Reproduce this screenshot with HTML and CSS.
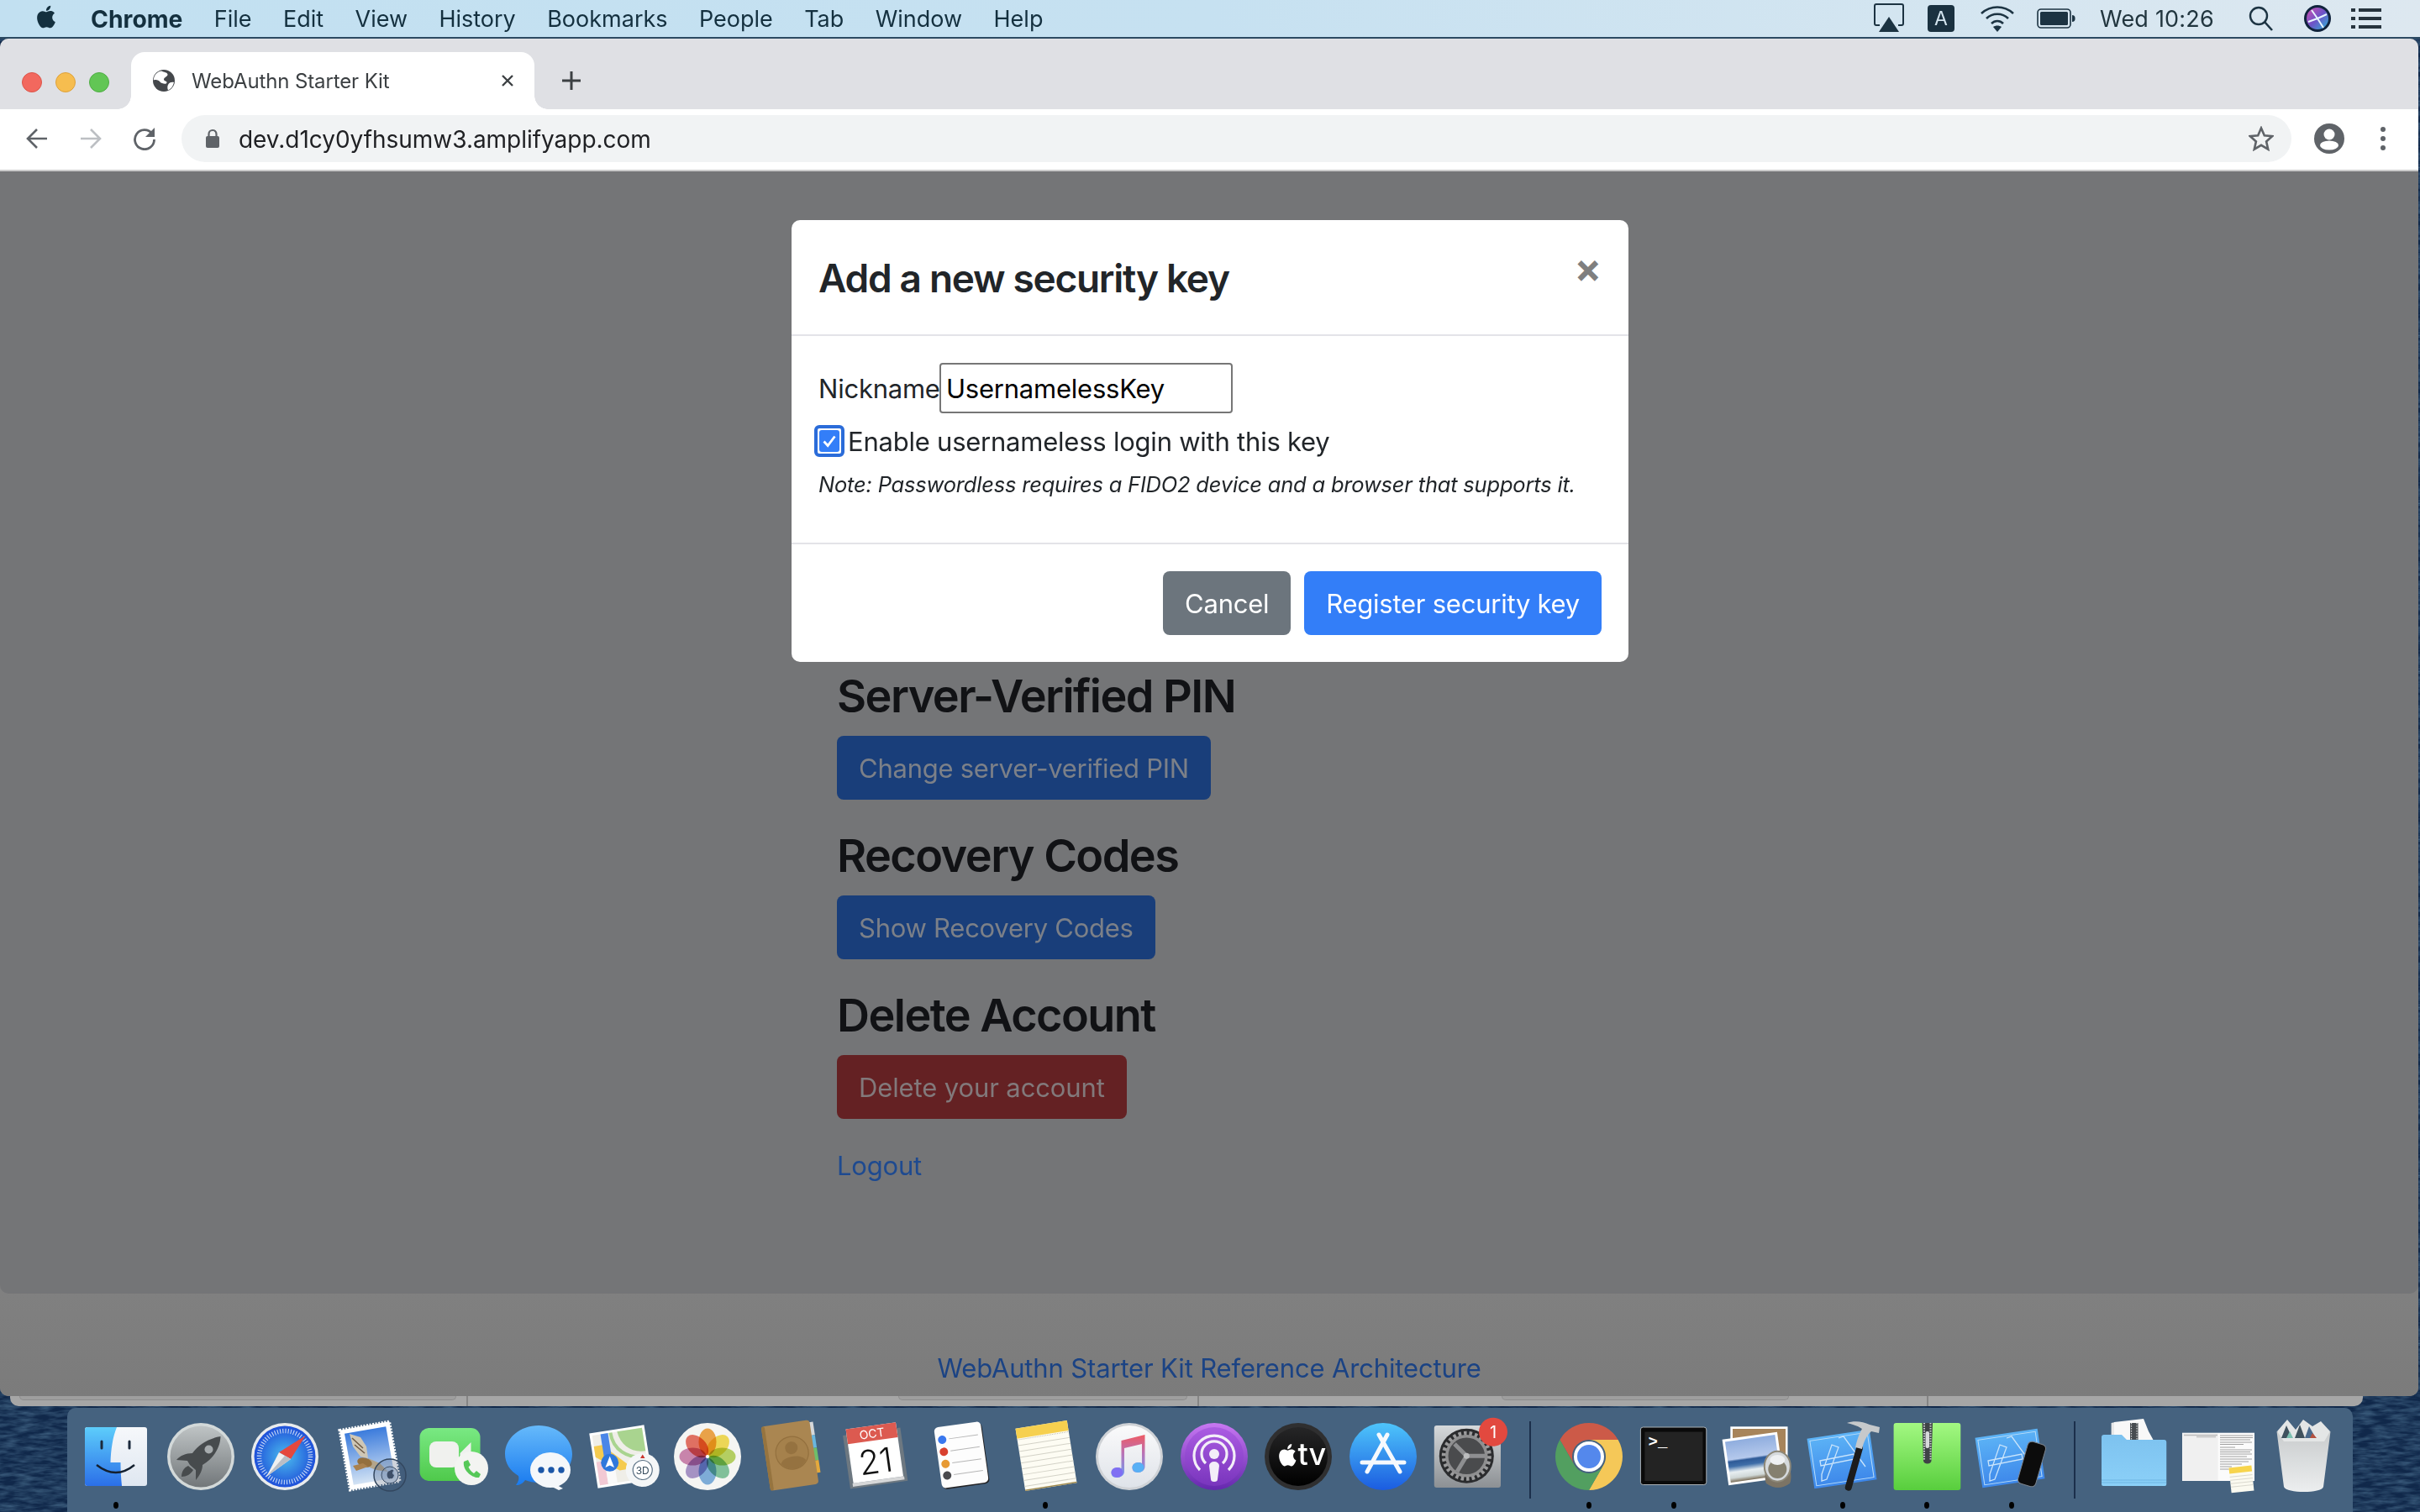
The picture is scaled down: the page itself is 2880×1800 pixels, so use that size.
FILE: index.html
```html
<!DOCTYPE html>
<html lang="en">
<head>
<meta charset="utf-8">
<title>WebAuthn Starter Kit</title>
<link rel="stylesheet" href="styles.css">
</head>
<body>
<svg class="defs" aria-hidden="true"><defs>
<linearGradient id="gFinderB" x1="0" y1="0" x2="0" y2="1"><stop offset="0" stop-color="#5dcdfb"/><stop offset="1" stop-color="#2b6fe8"/></linearGradient>
<linearGradient id="gFinderW" x1="0" y1="0" x2="0" y2="1"><stop offset="0" stop-color="#f6f8fb"/><stop offset="1" stop-color="#dfe7f1"/></linearGradient>
<linearGradient id="gRocket" x1="0" y1="0" x2="0" y2="1"><stop offset="0" stop-color="#bfc4c5"/><stop offset="1" stop-color="#72777a"/></linearGradient>
<radialGradient id="gSafari"><stop offset="0" stop-color="#4bbdee"/><stop offset="1" stop-color="#1f50d9"/></radialGradient>
<linearGradient id="gSky" x1="0" y1="0" x2="0" y2="1"><stop offset="0" stop-color="#3b7bdc"/><stop offset="1" stop-color="#d3e3f4"/></linearGradient>
<linearGradient id="gFace" x1="0" y1="0" x2="0" y2="1"><stop offset="0" stop-color="#79e983"/><stop offset="1" stop-color="#4fc94b"/></linearGradient>
<linearGradient id="gMsg" x1="0" y1="0" x2="0" y2="1"><stop offset="0" stop-color="#66bafb"/><stop offset="1" stop-color="#1a7bef"/></linearGradient>
<linearGradient id="gMusicBg" x1="0" y1="0" x2="0" y2="1"><stop offset="0" stop-color="#fafafb"/><stop offset="1" stop-color="#dfe3e9"/></linearGradient>
<linearGradient id="gNote" x1="0" y1="0" x2="0" y2="1"><stop offset="0" stop-color="#ee5a63"/><stop offset=".45" stop-color="#b873b8"/><stop offset="1" stop-color="#6c9df2"/></linearGradient>
<linearGradient id="gPod" x1="0" y1="0" x2="0" y2="1"><stop offset="0" stop-color="#c878f2"/><stop offset="1" stop-color="#6428ad"/></linearGradient>
<linearGradient id="gPod2" x1="0" y1="0" x2="0" y2="1"><stop offset="0" stop-color="#ab5ce2"/><stop offset="1" stop-color="#7935bd"/></linearGradient>
<linearGradient id="gTv" x1="0" y1="0" x2="0" y2="1"><stop offset="0" stop-color="#262627"/><stop offset="1" stop-color="#000"/></linearGradient>
<linearGradient id="gStore" x1="0" y1="0" x2="0" y2="1"><stop offset="0" stop-color="#4ec5fb"/><stop offset="1" stop-color="#1b5ce0"/></linearGradient>
<linearGradient id="gPrefs" x1="0" y1="0" x2="0" y2="1"><stop offset="0" stop-color="#d6d9db"/><stop offset="1" stop-color="#8c9094"/></linearGradient>
<linearGradient id="gPrint" x1="0" y1="0" x2="0" y2="1"><stop offset="0" stop-color="#5cb3f6"/><stop offset="1" stop-color="#3d87ea"/></linearGradient>
<linearGradient id="gZip" x1="0" y1="0" x2="0" y2="1"><stop offset="0" stop-color="#a3f882"/><stop offset="1" stop-color="#58ce3d"/></linearGradient>
<linearGradient id="gFolder" x1="0" y1="0" x2="0" y2="1"><stop offset="0" stop-color="#7dc2ef"/><stop offset="1" stop-color="#8bd0f8"/></linearGradient>
<linearGradient id="gTrash" x1="0" y1="0" x2="0" y2="1"><stop offset="0" stop-color="#c9cccd"/><stop offset="1" stop-color="#eceeef"/></linearGradient>
<linearGradient id="gOcean" x1="0" y1="0" x2="0" y2="1"><stop offset="0" stop-color="#8fadde"/><stop offset=".45" stop-color="#b5c9ec"/><stop offset=".5" stop-color="#2e5a97"/><stop offset=".62" stop-color="#3f6ea8"/><stop offset=".76" stop-color="#e7eef1"/><stop offset=".9" stop-color="#cfd7d6"/><stop offset="1" stop-color="#7b6e58"/></linearGradient>
<linearGradient id="gSiri" x1="0" y1="0" x2="1" y2="1"><stop offset="0" stop-color="#d24fb0"/><stop offset=".5" stop-color="#6d53c8"/><stop offset="1" stop-color="#2fb5d8"/></linearGradient>
</defs></svg>

<header class="menubar">
  <svg class="apple" viewBox="0 0 24 24"><path d="M18.71 19.5c-.83 1.24-1.71 2.45-3.05 2.47-1.34.03-1.77-.79-3.29-.79-1.53 0-2 .77-3.27.82-1.31.05-2.3-1.32-3.14-2.53C4.25 17 2.94 12.45 4.7 9.39c.87-1.52 2.43-2.48 4.12-2.51 1.28-.02 2.5.87 3.29.87.78 0 2.26-1.07 3.81-.91.65.03 2.47.26 3.64 1.98-.09.06-2.17 1.28-2.15 3.81.03 3.02 2.65 4.03 2.68 4.04-.03.07-.42 1.44-1.38 2.83M13 3.5c.73-.83 1.94-1.46 2.94-1.5.13 1.17-.34 2.35-1.04 3.19-.69.85-1.83 1.51-2.95 1.42-.15-1.15.41-2.35 1.05-3.11z"/></svg>
  <nav class="menus">
    <span class="menu-app">Chrome</span><span>File</span><span>Edit</span><span>View</span><span>History</span><span>Bookmarks</span><span>People</span><span>Tab</span><span>Window</span><span>Help</span>
  </nav>
  <div class="status">
    <svg class="st-air" viewBox="0 0 36 38"><path d="M7 27H3a2 2 0 0 1-2-2V4a2 2 0 0 1 2-2h30a2 2 0 0 1 2 2v21a2 2 0 0 1-2 2h-4" fill="none" stroke="#1c3342" stroke-width="2"/><path d="M18 17 30 35H6Z" fill="#1c3342"/></svg>
    <div class="st-a">A</div>
    <svg class="st-wifi" viewBox="0 0 42 32"><g fill="none" stroke="#1c3342" stroke-width="2.6"><path d="M2 10C13 0 29 0 40 10"/><path d="M8 16C15 9 27 9 34 16"/><path d="M14 22C18 18 24 18 28 22"/></g><path d="M21 32 16 26C19 24 23 24 26 26Z" fill="#1c3342"/></svg>
    <svg class="st-batt" viewBox="0 0 46 24"><rect x="1" y="1" width="39" height="22" rx="4" fill="none" stroke="#1c3342" stroke-width="1.6"/><rect x="4" y="4" width="33" height="16" rx="1.5" fill="#1c3342"/><path d="M42 8c2.4 0 3.6 1.6 3.6 4s-1.2 4-3.6 4Z" fill="#1c3342"/></svg>
    <span class="st-time">Wed 10:26</span>
    <svg class="st-search" viewBox="0 0 30 30"><circle cx="12" cy="12" r="10" fill="none" stroke="#1c3342" stroke-width="2.4"/><path d="M19 19 28 29" stroke="#1c3342" stroke-width="2.6"/></svg>
    <svg class="st-siri" viewBox="0 0 32 32"><circle cx="16" cy="16" r="16" fill="#10233c"/><circle cx="16" cy="16" r="13" fill="url(#gSiri)"/><path d="M16 16 9 6M16 16 27 11M16 16 23 27M16 16 5 20" stroke="#e8f6ff" stroke-width="2"/></svg>
    <svg class="st-list" viewBox="0 0 36 26"><g fill="#26333d"><rect y="1" width="5" height="4"/><rect y="11" width="5" height="4"/><rect y="21" width="5" height="4"/><rect x="9" y="1" width="27" height="4"/><rect x="9" y="11" width="27" height="4"/><rect x="9" y="21" width="27" height="4"/></g></svg>
  </div>
</header>

<div class="window">
  <div class="tabstrip">
    <div class="lights"><i class="l-red"></i><i class="l-yellow"></i><i class="l-green"></i></div>
    <div class="tab">
      <svg class="favicon" viewBox="0 0 26 26"><circle cx="13" cy="13" r="13" fill="#44474b"/><path d="M10 1.500C13 3 17 3 17.500 5.500S13 9 13 11.500s4 1.500 3.500 4S10 16.500 8.500 14.500 4 11.500.8 12.500C1 7 4.500 2.500 10 1.500ZM25 15c-2.500-.5-5 0-6.500 2s-1.500 5-.5 7.500c3.500-1.500 6-5 7-9.500Z" fill="#fff"/></svg>
      <span class="tab-title">WebAuthn Starter Kit</span>
      <svg class="tab-x" viewBox="0 0 16 16"><path d="M2 2 14 14M14 2 2 14" stroke="#3c4043" stroke-width="2.4"/></svg>
    </div>
    <svg class="newtab" viewBox="0 0 24 24"><path d="M12 1V23M1 12H23" stroke="#3c4043" stroke-width="3"/></svg>
  </div>
  <div class="toolbar">
    <svg class="tb-ic" viewBox="0 0 28 28"><path d="M26 14H3M14 3 3 14 14 25" fill="none" stroke="#5f6368" stroke-width="2.6"/></svg>
    <svg class="tb-ic" viewBox="0 0 28 28"><path d="M2 14H25M14 3 25 14 14 25" fill="none" stroke="#bcbfc3" stroke-width="2.6"/></svg>
    <svg class="tb-ic" viewBox="0 0 28 28"><path d="M23 8A11.5 11.5 0 1 0 25.5 15" fill="none" stroke="#5f6368" stroke-width="2.8"/><path d="M26 1V12H15Z" fill="#5f6368"/></svg>
    <div class="omnibox">
      <svg class="lock" viewBox="0 0 18 24"><path d="M4.500 10V6.500a4.500 4.500 0 0 1 9 0V10" fill="none" stroke="#5f6368" stroke-width="2.2"/><rect x="1" y="9" width="16" height="14" rx="2" fill="#5f6368"/></svg>
      <span class="url">dev.d1cy0yfhsumw3.amplifyapp.com</span>
      <svg class="star" viewBox="0 0 30 30"><path d="M15 2.500 18.800 11.300 28.300 12.100 21.100 18.400 23.200 27.700 15 22.800 6.800 27.700 8.900 18.400 1.700 12.100 11.200 11.300Z" fill="none" stroke="#5f6368" stroke-width="2.6"/></svg>
    </div>
    <svg class="avatar" viewBox="0 0 36 36"><circle cx="18" cy="18" r="18" fill="#5f6368"/><circle cx="18" cy="13" r="6.500" fill="#fff"/><ellipse cx="18" cy="26" rx="11" ry="5.500" fill="#fff"/></svg>
    <svg class="kebab" viewBox="0 0 8 32"><circle cx="4" cy="5" r="3" fill="#5f6368"/><circle cx="4" cy="16" r="3" fill="#5f6368"/><circle cx="4" cy="27" r="3" fill="#5f6368"/></svg>
  </div>
  <main class="page">
    <section class="section">
      <h2>Server-Verified PIN</h2>
      <button class="btn btn-dim-blue">Change server-verified PIN</button>
    </section>
    <section class="section">
      <h2>Recovery Codes</h2>
      <button class="btn btn-dim-blue">Show Recovery Codes</button>
    </section>
    <section class="section">
      <h2>Delete Account</h2>
      <button class="btn btn-dim-red">Delete your account</button>
    </section>
    <a class="logout">Logout</a>
  </main>
  <footer class="pagefoot"><a>WebAuthn Starter Kit Reference Architecture</a></footer>
</div>

<div class="behind"><i class="seg s1"></i><i class="div"></i><i class="seg s2"></i><i class="div"></i><i class="seg s3"></i><i class="div d3"></i></div>

<div class="dock">
  <!-- Finder -->
  <div class="cell run"><svg viewBox="0 0 100 100"><rect x="13" y="15" width="74" height="70" rx="3" fill="url(#gFinderW)"/><path d="M16 15H51C46 27 44 42 43.500 57H55.500C55.500 66 56 76 57 85H16a3 3 0 0 1-3-3V18a3 3 0 0 1 3-3Z" fill="url(#gFinderB)"/><path d="M33 32V40M66 32V40" stroke="#1b2a3c" stroke-width="3" stroke-linecap="round"/><path d="M27 60Q50 78 72 60" fill="none" stroke="#14202f" stroke-width="2.400"/></svg></div>
  <!-- Launchpad -->
  <div class="cell"><svg viewBox="0 0 100 100"><circle cx="50" cy="50" r="40" fill="#d3d9d9"/><circle cx="50" cy="50" r="36.500" fill="url(#gRocket)"/><path d="M73.500 26C60 28 47 36 40 46 32 46 25 49 21 54L34 55 37 60 44 66 44 78C49 72 52 66 52 60 65 52 73 40 73.500 26Z" fill="#474b4d"/><path d="M35 61C30 63 27 68 27 74 33 74 38 71 41 66Z" fill="#474b4d"/><circle cx="59.500" cy="41.500" r="5" fill="#a7acae"/></svg></div>
  <!-- Safari -->
  <div class="cell"><svg viewBox="0 0 100 100"><circle cx="50" cy="50" r="40" fill="#e9ebec"/><circle cx="50" cy="50" r="36.500" fill="url(#gSafari)"/><circle cx="50" cy="50" r="30.500" fill="none" stroke="#fff" stroke-width="5.500" stroke-dasharray="1 2.200" opacity=".8"/><path d="M74.600 25 43 45 57 53Z" fill="#e5483e"/><path d="M28 74 43 45 57 53Z" fill="#f0f0f0"/><path d="M28 74 50 49 57 53Z" fill="#b9bec6"/></svg></div>
  <!-- Mail -->
  <div class="cell"><svg viewBox="0 0 100 100"><g transform="rotate(-10 50 49)"><rect x="20" y="13" width="60" height="72" fill="#fff"/><rect x="20" y="13" width="60" height="72" fill="none" stroke="#fff" stroke-width="3.500" stroke-dasharray="2 1.600"/><rect x="25" y="18" width="50" height="62" fill="url(#gSky)"/></g><path d="M26 23 39 27 46 38 48 52 39 50 30 38Z" fill="#cfc7b5"/><path d="M29 28 42 40M32 36 44 46" stroke="#6d5a45" stroke-width="1.500"/><path d="M48 52 62 58 72 68 58 66 50 63Z" fill="#b4a58a"/><ellipse cx="44" cy="57" rx="9" ry="5.500" fill="#94703f" transform="rotate(15 44 57)"/><path d="M42 58 30 61 34 67 48 62Z" fill="#a9814f"/><circle cx="74" cy="72" r="19" fill="#3c5070" fill-opacity=".25" stroke="#33475f" stroke-width="1.500"/><circle cx="74" cy="72" r="10" fill="#8aa0bd" fill-opacity=".55" stroke="#3c4f68" stroke-width="1"/><path d="M74 67c2-2 4-1 4.500 0-2 1-2 4 .5 5-1 3-2 5-4 4-2 1-3 0-4-2-1-3 0-7 3-7Z" fill="#3e4f68"/></svg></div>
  <!-- FaceTime -->
  <div class="cell"><svg viewBox="0 0 100 100"><rect x="9.500" y="16" width="72" height="63" rx="11" fill="url(#gFace)"/><rect x="21" y="32" width="35" height="31" rx="8" fill="#f0f1ee"/><path d="M57.500 46 70.500 33V60L57.500 50Z" fill="#eff1ee"/><circle cx="71" cy="64" r="20" fill="#f3f4f1"/><path d="M62 56 67 54 70 60 67.500 62.500C69 66 71 68 74 70L77 67 82 71 80 75C72 76 60 66 62 56Z" fill="#56c858"/></svg></div>
  <!-- Messages -->
  <div class="cell"><svg viewBox="0 0 100 100"><path d="M50 13C72 13 90 28 90 47S72 81 50 81C44 81 39 80 34 78 31 82 28 84 23 84 26 80 27 76 26 73 16 67 10 58 10 47 10 28 28 13 50 13Z" fill="url(#gMsg)"/><ellipse cx="64" cy="66" rx="24" ry="21" fill="#f4f7fa"/><path d="M72 84 79 88 74 90 66 86Z" fill="#f4f7fa"/><circle cx="53" cy="66" r="3.700" fill="#1b57a8"/><circle cx="65" cy="66" r="3.700" fill="#1b57a8"/><circle cx="77" cy="66" r="3.700" fill="#1b57a8"/></svg></div>
  <!-- Maps -->
  <div class="cell"><svg viewBox="0 0 100 100"><g transform="rotate(-9 48 50)"><rect x="15" y="17" width="66" height="66" fill="#fff"/><rect x="18" y="20" width="60" height="60" fill="#efeee8"/><path d="M18 52H28V80H18Z" fill="#f2c9d4"/><rect x="28" y="50" width="11" height="30" fill="#fafafa"/><path d="M18 33H28L56 62V66H44L18 46Z" fill="#f5cb4f"/><rect x="28" y="20" width="9" height="38" fill="#4a86e8"/><path d="M48 20H78V48C62 48 50 38 48 20Z" fill="#a9d48f"/><path d="M40 20C40 40 54 54 78 55" fill="none" stroke="#a9d48f" stroke-width="4"/></g><circle cx="34.700" cy="57.300" r="10.500" fill="#2f78dc"/><path d="M34.700 49.500 40 63 34.700 60.500 29.400 63Z" fill="#fff"/><circle cx="73.750" cy="66" r="20" fill="#f4f6f7"/><circle cx="73.750" cy="66" r="11.500" fill="#fff" stroke="#5b7184" stroke-width="1.200"/><text class="svgt t3d" x="73.750" y="70.500" text-anchor="middle">3D</text><path d="M73.750 47.500 76.500 52H71Z" fill="#c9332c"/></svg></div>
  <!-- Photos -->
  <div class="cell"><svg viewBox="0 0 100 100"><circle cx="50" cy="50" r="40" fill="#f5f5f3"/><g class="petals"><ellipse cx="50" cy="32.500" rx="10.500" ry="16" fill="#f2a23c"/><ellipse cx="50" cy="32.500" rx="10.500" ry="16" fill="#f6dd4c" transform="rotate(45 50 50)"/><ellipse cx="50" cy="32.500" rx="10.500" ry="16" fill="#b6d45a" transform="rotate(90 50 50)"/><ellipse cx="50" cy="32.500" rx="10.500" ry="16" fill="#7cc49a" transform="rotate(135 50 50)"/><ellipse cx="50" cy="32.500" rx="10.500" ry="16" fill="#78ade0" transform="rotate(180 50 50)"/><ellipse cx="50" cy="32.500" rx="10.500" ry="16" fill="#a58fc9" transform="rotate(225 50 50)"/><ellipse cx="50" cy="32.500" rx="10.500" ry="16" fill="#cc7fae" transform="rotate(270 50 50)"/><ellipse cx="50" cy="32.500" rx="10.500" ry="16" fill="#e8695a" transform="rotate(315 50 50)"/></g><circle cx="50" cy="50" r="2" fill="#fff"/></svg></div>
  <!-- Contacts -->
  <div class="cell"><svg viewBox="0 0 100 100"><g transform="rotate(-8.500 48 48)"><rect x="76" y="13" width="5" height="16" fill="#d6d8da"/><rect x="76" y="29" width="5" height="15" fill="#69b6de"/><rect x="76" y="44" width="5" height="15" fill="#6ebe6a"/><rect x="76" y="59" width="5" height="15" fill="#e4a93c"/><rect x="19" y="10" width="58" height="77" rx="4" fill="#aa8651"/><rect x="19" y="10" width="4" height="77" rx="2" fill="#96743f"/><circle cx="51" cy="46" r="19.500" fill="#a5814c" stroke="#93703e" stroke-width="1.200"/><circle cx="51" cy="40" r="7.500" fill="#957240"/><path d="M36 57C40 48 62 48 66 57 58 68 44 68 36 57Z" fill="#957240"/></g></svg></div>
  <!-- Calendar -->
  <div class="cell"><svg viewBox="0 0 100 100"><g transform="rotate(-8 48 47)"><rect x="13.500" y="20" width="69" height="64" fill="#6d7881"/><rect x="17" y="78" width="62" height="4" fill="#d6d7d8"/><rect x="18" y="13" width="60" height="65" fill="#fff"/><rect x="18" y="13" width="60" height="18" fill="#dc5a50"/><text class="svgt tcalm" x="48" y="27.500" text-anchor="middle">OCT</text><text class="svgt tcald" x="48" y="70" text-anchor="middle">21</text></g></svg></div>
  <!-- Reminders -->
  <div class="cell"><svg viewBox="0 0 100 100"><g transform="rotate(-8 51 48)"><rect x="24" y="13" width="56" height="73" rx="5" fill="#232325"/><rect x="23" y="11.500" width="56" height="73" rx="5" fill="#fdfdfd"/><g stroke="#b6b6b6" stroke-width="1"><path d="M39 27H74M39 41.500H74M39 56H74M39 70H74"/></g><circle cx="31" cy="27" r="5" fill="#3a78ee"/><circle cx="31" cy="41.500" r="5" fill="#d8412f"/><circle cx="31" cy="56" r="5" fill="#e79a34"/><circle cx="31" cy="70" r="5" fill="#4a4a4e"/></g></svg></div>
  <!-- Notes -->
  <div class="cell run"><svg viewBox="0 0 100 100"><g transform="rotate(-9 51 49)"><rect x="20" y="11.500" width="62" height="75" fill="#fdfcf3"/><rect x="20" y="11.500" width="62" height="12" fill="#f6d04f"/><path d="M20 25H82" stroke="#bdbcb2" stroke-width="1" stroke-dasharray="1 1"/><g stroke="#d3d2c7" stroke-width="1"><path d="M20 32H82M20 39H82M20 46H82M20 53H82M20 60H82M20 67H82M20 74H82M20 81H82"/></g><rect x="20" y="85" width="62" height="1.500" fill="#a08b50"/></g></svg></div>
  <!-- Music -->
  <div class="cell"><svg viewBox="0 0 100 100"><circle cx="50" cy="50" r="40" fill="#cfd2d6"/><circle cx="50" cy="50" r="37" fill="url(#gMusicBg)"/><path d="M40.500 31 68.500 24V62C68.500 66 65 69 60 69 55 69 53.500 66 53.500 63 53.500 59 57 57 61 57 63 57 64.500 57.500 65 58V35L44 40V68C44 72 40 75 35 75 30 75 28.500 72 28.500 69 28.500 65 32 63 36 63 38 63 39.500 63.500 40.500 64Z" fill="url(#gNote)"/><ellipse cx="35.500" cy="69" rx="7" ry="6" fill="#7f6ff3"/><ellipse cx="60.500" cy="63" rx="7" ry="6" fill="#58b0f5"/></svg></div>
  <!-- Podcasts -->
  <div class="cell"><svg viewBox="0 0 100 100"><circle cx="50" cy="50" r="40" fill="url(#gPod)"/><circle cx="50" cy="50" r="35" fill="url(#gPod2)"/><g fill="none" stroke="#f3eef8" stroke-width="3.200"><path d="M33 66A24 24 0 1 1 67 66"/><path d="M40 58A15 15 0 1 1 60 58"/></g><circle cx="50" cy="47" r="6" fill="#f3eef8"/><path d="M44 61a6 5 0 0 1 12 0L54 77a4 3 0 0 1-8 0Z" fill="#f3eef8"/></svg></div>
  <!-- TV -->
  <div class="cell"><svg viewBox="0 0 100 100"><circle cx="50" cy="50" r="40" fill="#2f2f30"/><circle cx="50" cy="50" r="35" fill="url(#gTv)"/><path transform="translate(22.300 32.400) scale(1.250 1.320)" fill="#fff" d="M18.710 19.500c-.83 1.240-1.710 2.450-3.050 2.470-1.340.03-1.770-.79-3.290-.79-1.530 0-2 .77-3.270.82-1.310.05-2.300-1.320-3.140-2.530C4.250 17 2.940 12.450 4.700 9.390c.87-1.520 2.430-2.480 4.120-2.510 1.280-.02 2.500.87 3.290.87.78 0 2.260-1.070 3.810-.91.65.03 2.470.26 3.640 1.980-.09.06-2.170 1.280-2.150 3.810.03 3.020 2.650 4.030 2.680 4.040-.03.07-.42 1.440-1.380 2.830M13 3.500c.73-.83 1.940-1.460 2.940-1.500.13 1.170-.34 2.350-1.040 3.190-.69.85-1.830 1.510-2.950 1.420-.15-1.150.41-2.350 1.050-3.110z"/><text class="svgt ttv" x="49.500" y="60">tv</text></svg></div>
  <!-- App Store -->
  <div class="cell"><svg viewBox="0 0 100 100"><circle cx="50" cy="50" r="40" fill="url(#gStore)"/><g stroke="#f6f9fd" stroke-width="5" stroke-linecap="round"><path d="M45 24 70 68M55 24 31 68M25 57H75"/></g></svg></div>
  <!-- System Preferences -->
  <div class="cell"><svg viewBox="0 0 100 100"><rect x="10.800" y="13" width="79.200" height="74" rx="3" fill="url(#gPrefs)"/><circle cx="49.300" cy="49.300" r="32.500" fill="#2b2c2e"/><circle cx="49.300" cy="49.300" r="27" fill="none" stroke="#9b9b9c" stroke-width="5" stroke-dasharray="3.500 3"/><circle cx="49.300" cy="49.300" r="23.500" fill="#4a4b4d" stroke="#8f8f90" stroke-width="3.500"/><g stroke="#8e8f91" stroke-width="5"><path d="M49.300 49.300 35 35M49.300 49.300H71M49.300 49.300 38 68"/></g><circle cx="49.300" cy="49.300" r="3.500" fill="#bcbdbe"/><circle cx="81" cy="20.700" r="17" fill="#e2493f"/><text class="svgt tbadge" x="81" y="27.700" text-anchor="middle">1</text></svg></div>
  <div class="sep"></div>
  <!-- Chrome -->
  <div class="cell run"><svg viewBox="0 0 100 100"><path d="M50 10A40 40 0 0 1 84.640 30H50A20 20 0 0 0 32.680 60L15.360 30A40 40 0 0 1 50 10Z" fill="#cc5a48"/><path d="M84.640 30A40 40 0 0 1 50 90L67.320 60A20 20 0 0 0 50 30Z" fill="#f5c858"/><path d="M15.360 30 32.680 60A20 20 0 0 0 67.320 60L50 90A40 40 0 0 1 15.360 30Z" fill="#529f60"/><circle cx="50" cy="50" r="18" fill="#fff"/><circle cx="50" cy="50" r="14" fill="#5488ec"/></svg></div>
  <!-- Terminal -->
  <div class="cell run"><svg viewBox="0 0 100 100"><rect x="10.400" y="15" width="78.400" height="68.500" rx="3" fill="#0a0a0a" stroke="#aab0b5" stroke-width="1"/><rect x="15.400" y="20.600" width="69" height="58.400" fill="#232323"/><text class="svgt tterm" x="19.500" y="38">&gt;_</text></svg></div>
  <!-- Preview -->
  <div class="cell"><svg viewBox="0 0 100 100"><rect x="17.300" y="14.300" width="68.200" height="46" fill="#fff"/><rect x="20" y="17" width="63" height="42" fill="#a7845a"/><g transform="rotate(-8 44 52)"><rect x="11" y="25" width="66" height="55" fill="#fff"/><rect x="14" y="28" width="60" height="49" fill="url(#gOcean)"/></g><path d="M60 62H88Q91 76 88 82 74 92 60 82 57 76 60 62Z" fill="#7c7465"/><ellipse cx="73.300" cy="61.700" rx="15.500" ry="18" fill="#d5d9dc" stroke="#8d8879" stroke-width="2"/><ellipse cx="73.300" cy="65" rx="11" ry="11" fill="#85806f"/><ellipse cx="73.300" cy="54" rx="9" ry="6" fill="#eef0f2"/></svg></div>
  <!-- Xcode -->
  <div class="cell run"><svg viewBox="0 0 100 100"><g transform="rotate(-8.500 49 53)"><rect x="11.500" y="23" width="75" height="60" fill="url(#gPrint)"/><rect x="14.500" y="26" width="69" height="54" fill="none" stroke="#b9ddf9" stroke-width="1"/></g><g fill="none" stroke="#cbe5fb" stroke-width="1.300"><path d="M37 36 45 39 31 77 25 79 25 71ZM45 28 51 26 77 62M23 55 63 47 64 53 24 61Z"/></g><path d="M70 40 56.800 86.700" stroke="#1c1c1c" stroke-width="8" stroke-linecap="round"/><path d="M55 10C63 7 74 8 82 12L94 15 93 22 84 20C79 24 75 32 73 41L65 39C67 30 70 22 73 17 67 13 60 11 55 10Z" fill="#c6c9cb"/></svg></div>
  <!-- Archive -->
  <div class="cell run"><svg viewBox="0 0 100 100"><rect x="10.600" y="10" width="79.700" height="80" rx="3" fill="url(#gZip)"/><path d="M44.600 10H57L55.500 55a4 3 0 0 1-9.500 0Z" fill="#3f4346"/><path d="M47 10V54M54.500 10V54" stroke="#c8cbcd" stroke-width="2" stroke-dasharray="1.500 1.500"/><rect x="48.500" y="20" width="4.500" height="20" rx="2" fill="#d8dadb"/></svg></div>
  <!-- Simulator -->
  <div class="cell run"><svg viewBox="0 0 100 100"><g transform="rotate(-8.500 48 52)"><rect x="10.500" y="22" width="75" height="60" fill="url(#gPrint)"/><rect x="13.500" y="25" width="69" height="54" fill="none" stroke="#b9ddf9" stroke-width="1"/></g><g fill="none" stroke="#cbe5fb" stroke-width="1.300"><path d="M36 36 44 39 30 77 24 79 24 71ZM44 28 50 26 76 62M22 55 62 47 63 53 23 61Z"/></g><g transform="rotate(16 74 59)"><rect x="63" y="33" width="22" height="52" rx="5" fill="#0c0c0c" stroke="#7b838d" stroke-width="1"/></g></svg></div>
  <div class="sep"></div>
  <!-- Folder -->
  <div class="cell"><svg viewBox="0 0 100 100"><path d="M23.600 10 28 9V30H23.600Z" fill="#e8e8e8"/><path d="M27 9 62 5 68 20 73.500 30H27Z" fill="#f8f8f8"/><rect x="46" y="10" width="9.500" height="20" fill="#474c50"/><path d="M47.500 10V30M54 10V30" stroke="#d0d2d3" stroke-width="1.200" stroke-dasharray="1.500 1.500"/><path d="M12 27a3 3 0 0 1 3-3H36L42 30H86a3 3 0 0 1 3.250 3V83a2 2 0 0 1-2 2H14a2 2 0 0 1-2-2Z" fill="url(#gFolder)"/><path d="M12 78H89M12 81H89" stroke="#68b0de" stroke-width=".8"/></svg></div>
  <!-- Document -->
  <div class="cell"><svg viewBox="0 0 100 100"><rect x="7" y="21.700" width="86" height="57.300" fill="#fbfbfb"/><rect x="7.500" y="22.200" width="42" height="56.300" fill="#f0f0f0"/><path d="M9 24.500H49" stroke="#bbb" stroke-width="1.500"/><path d="M24 26H47" stroke="#ccc" stroke-width="3"/><g stroke="#8a8a8a" stroke-width=".8"><path d="M52 25H91M52 27.500H91M52 30H88M52 33H90M52 35.500H80M52 39H70M52 42H90M52 44.500H88M52 47H90M52 50H84M52 53H90M52 56H86M52 59H78M52 62H66M52 65H64"/></g><g transform="rotate(-6 77 77)"><rect x="64" y="62" width="27" height="30" fill="#fbfaf0"/><rect x="64" y="62" width="27" height="7" fill="#f7d44c"/><path d="M64 73H91M64 77H91M64 81H91M64 85H91" stroke="#d3d2c7" stroke-width=".8"/></g></svg></div>
  <!-- Trash -->
  <div class="cell"><svg viewBox="0 0 100 100"><path d="M19.500 20C28 26 74 26 83.500 20L75 86C73 94 31 94 28 86Z" fill="url(#gTrash)"/><path d="M20 20 32 6 42 18 51 6 62 14 72 8 83 20 76 32H28Z" fill="#e4e6e6"/><path d="M31 13 38 28H25ZM47 12 53 28H41Z" fill="#40525e"/><path d="M58 14 66 28 53 28Z" fill="#4a6a8c"/><path d="M35 20 39 28 31 28Z" fill="#7cc0b0"/><path d="M62 22 67 28H59Z" fill="#b5513f"/></svg></div>
</div>

<div class="backdrop-layer">
  <div class="modal" role="dialog">
    <div class="modal-head">
      <h5>Add a new security key</h5>
      <span class="close">×</span>
    </div>
    <div class="modal-body">
      <div class="field"><label>Nickname</label><input class="nick" type="text" value="UsernamelessKey"></div>
      <div class="check"><span class="box"><svg viewBox="0 0 26 26"><path d="M6 13.500 11 19 20 7" fill="none" stroke="#fff" stroke-width="3"/></svg></span><span>Enable usernameless login with this key</span></div>
      <p class="note">Note: Passwordless requires a FIDO2 device and a browser that supports it.</p>
    </div>
    <div class="modal-foot">
      <button class="btn btn-gray">Cancel</button>
      <button class="btn btn-blue">Register security key</button>
    </div>
  </div>
</div>
</body>
</html>
```

FILE: styles.css
```css
* { box-sizing: border-box; }
html, body { margin: 0; padding: 0; }
body {
  width: 2880px; height: 1800px; overflow: hidden; position: relative;
  background-color: #10284a;
  background-image: url("data:image/svg+xml,%3Csvg xmlns='http://www.w3.org/2000/svg' width='240' height='200'%3E%3Cfilter id='n'%3E%3CfeTurbulence type='fractalNoise' baseFrequency='.05 .22' numOctaves='3' stitchTiles='stitch'/%3E%3CfeColorMatrix values='0 0 0 0 .05 0 0 0 0 .12 0 0 0 0 .22 1.6 0 0 0 -.5'/%3E%3C/filter%3E%3Crect width='240' height='200' filter='url(%23n)'/%3E%3C/svg%3E");
  font-family: "Inter", "Liberation Sans", sans-serif;
  color: #212529;
}
.defs { display: block; width: 0; height: 0; }

/* menu bar */
.menubar {
  height: 46px; display: flex; align-items: center;
  background: linear-gradient(90deg, #c2e0f1 0%, #c6e1f1 50%, #dde8f0 100%);
  border-bottom: 2px solid #2c4a62;
  padding: 0 46px 0 42px;
  color: #14303f; font-size: 27px;
}
.apple { width: 32px; height: 36px; fill: #14303f; margin-top: -4px; margin-left: -3px; }
.menus { display: flex; align-items: center; gap: 37.4px; margin-left: 37px; padding-top: 1px; white-space: nowrap; }
.menu-app { font-weight: 700; font-size: 28.3px; }
.status { margin-left: auto; display: flex; align-items: center; }
.st-air { width: 36px; height: 38px; }
.st-a { width: 32px; height: 32px; margin-left: 28px; background: #1a3140; color: #d4e5ef; border-radius: 4px; display: flex; align-items: center; justify-content: center; font-size: 23px; }
.st-wifi { width: 42px; height: 32px; margin-left: 30px; }
.st-batt { width: 46px; height: 24px; margin-left: 26px; }
.st-time { margin-left: 29px; width: 137px; padding-top: 1px; white-space: nowrap; color: #22363f; letter-spacing: .2px; }
.st-search { width: 30px; height: 30px; margin-left: 40px; }
.st-siri { width: 32px; height: 32px; margin-left: 36px; }
.st-list { width: 36px; height: 26px; margin-left: 24px; }

/* chrome window */
.window {
  height: 1616px; margin-right: 2px; display: flex; flex-direction: column;
  border-radius: 10px; overflow: hidden; background: #808080;
}
.tabstrip { height: 84px; flex: none; display: flex; align-items: flex-end; background: #dfe0e4; position: relative; }
.lights { width: 156px; height: 68px; padding: 24px 0 0 26px; display: flex; gap: 16px; align-self: flex-end; }
.lights i { width: 24px; height: 24px; border-radius: 50%; display: block; }
.l-red { background: #f2685e; border: 1px solid #dc5449; }
.l-yellow { background: #f6bd4f; border: 1px solid #dea13a; }
.l-green { background: #62c655; border: 1px solid #4fad44; }
.tab {
  width: 480px; height: 68px; background: #fff; border-radius: 16px 16px 0 0;
  display: flex; align-items: center; padding: 0 24px 0 26px; position: relative;
}
.tab::before, .tab::after {
  content: ""; position: absolute; bottom: 0; width: 16px; height: 16px;
}
.tab::before { left: -16px; background: radial-gradient(circle at 0 0, transparent 15.5px, #fff 16px); }
.tab::after { right: -16px; background: radial-gradient(circle at 100% 0, transparent 15.5px, #fff 16px); }
.favicon { width: 26px; height: 26px; flex: none; }
.tab-title { margin-left: 20px; font-size: 24px; color: #3c4043; white-space: nowrap; letter-spacing: -.12px; }
.tab-x { width: 16px; height: 16px; margin-left: auto; }
.newtab { width: 24px; height: 24px; margin: 0 0 22px 32px; }

.toolbar { height: 74px; flex: none; display: flex; align-items: center; background: #fff; border-bottom: 2px solid #cbcbcb; padding: 0 0 2px 30px; }
.tb-ic { width: 28px; height: 28px; margin-right: 36px; flex: none; }
.omnibox { width: 2511px; height: 56px; margin-left: -6px; background: #f1f3f4; border-radius: 28px; display: flex; align-items: center; padding: 0 21px 0 28px; flex: none; }
.lock { width: 18px; height: 24px; flex: none; }
.url { margin-left: 22px; padding-top: 2px; font-size: 28px; color: #202124; white-space: nowrap; letter-spacing: -.03px; }
.star { width: 30px; height: 30px; margin-left: auto; }
.avatar { width: 36px; height: 36px; margin-left: 27px; flex: none; }
.kebab { width: 8px; height: 32px; margin-left: 42px; flex: none; }

/* dimmed page */
.page {
  height: 1336px; flex: none; background: #747577; padding: 590px 0 0 996px;
  border-radius: 0 0 10px 10px;
}
.section { margin-bottom: 32px; }
.section h2 { margin: 0 0 13px 0; font-size: 54px; line-height: 69px; font-weight: 600; color: #111215; white-space: nowrap; letter-spacing: -1.55px; }
.btn {
  display: block; height: 76px; border: 0; border-radius: 8px; padding: 0 26px;
  font-family: inherit; font-size: 31px; white-space: nowrap; letter-spacing: -.25px;
}
.btn-dim-blue { background: #193e7a; color: #7c8088; }
.btn-dim-red { background: #642123; color: #82797b; letter-spacing: -.12px; }
.logout { display: block; margin-top: 4px; font-size: 31px; line-height: 48px; color: #1e4a90; letter-spacing: -.2px; }
.pagefoot { flex: 1; background: linear-gradient(#808080, #7b7b7b); text-align: center; font-size: 31px; color: #1b4384; padding-top: 70px; letter-spacing: -.15px; }

/* window behind */
.behind {
  height: 12px; margin: 0 68px 0 12px; background: #a6a6a6; border-radius: 0 0 10px 10px;
  display: flex; align-items: flex-start;
}
.seg { display: block; height: 5px; border: 1px solid #8c8c8c; border-top: 0; border-radius: 0 0 6px 6px; background: #9e9e9e; }
.div { display: block; width: 2px; height: 12px; background: #858585; margin-left: 12px; }
.s1 { width: 520px; margin-left: 11px; }
.s2 { width: 344px; margin-left: 512px; }
.s3 { width: 342px; margin-left: 360px; }
.d3 { margin-left: 164px; }

/* dock */
.dock {
  height: 124px; margin: 2px 80px 0; padding: 8px 0 0 7.75px;
  background: #45627f; border-radius: 10px 10px 0 0; display: flex; align-items: flex-start;
}
.cell { width: 100.5px; height: 116px; flex: none; display: flex; flex-direction: column; align-items: center; position: relative; }
.cell svg { width: 100px; height: 100px; display: block; overflow: visible; flex: none; }
.run::after { content: ""; width: 6px; height: 8px; border-radius: 50%; background: #000; margin-top: 4px; }
.sep { width: 2px; height: 92px; margin: 8px 18.75px 0 24px; background: #1b2f4b; flex: none; }
.petals ellipse { mix-blend-mode: multiply; opacity: .92; }
.svgt { font-family: "Inter", "Liberation Sans", sans-serif; }
.t3d { font-size: 12px; fill: #33495a; }
.tcalm { font-size: 14px; fill: #fff; }
.tcald { font-size: 40px; fill: #111; font-weight: 300; }
.ttv { font-size: 36px; fill: #fff; font-weight: 500; }
.tbadge { font-size: 20px; fill: #fff; }
.tterm { font-size: 19px; fill: #fff; font-weight: 700; font-family: "Liberation Mono", monospace; }

/* modal */
.backdrop-layer { position: absolute; left: 942px; top: 262px; }
.modal { width: 996px; height: 526px; background: #fff; border-radius: 10px; display: flex; flex-direction: column; }
.modal-head { height: 138px; flex: none; border-bottom: 2px solid #e3e3e8; padding: 0 32px; display: flex; justify-content: space-between; }
.modal-head h5 { margin: 38px 0 0; font-size: 46px; line-height: 62px; font-weight: 600; color: #212529; white-space: nowrap; letter-spacing: -1.3px; }
.close { font-size: 48px; line-height: 48px; font-weight: 700; color: #7f7f7f; margin: 33px 0 0 0; }
.modal-body { height: 246px; flex: none; padding: 32px 32px 0; font-size: 31px; letter-spacing: -.23px; }
.field { display: flex; align-items: center; height: 60px; }
.field label { width: 144px; color: #212529; white-space: nowrap; }
.nick {
  width: 349px; height: 60px; border: 2px solid #767676; border-radius: 4px; padding: 0 6px; margin: 0;
  font-family: inherit; font-size: 31px; color: #000; background: #fff; outline: 0; letter-spacing: -.23px;
}
.check { display: flex; align-items: center; height: 48px; margin-top: 9px; white-space: nowrap; }
.box { width: 36px; height: 38px; margin-left: -5px; margin-right: 4px; background: #fff; border: 4px solid #2b6cd9; border-radius: 6px; padding: 2px; flex: none; display: flex; }
.box svg { width: 100%; height: 100%; background: #337ef8; border-radius: 3px; display: block; }
.note { margin: 8px 0 0; font-size: 25.5px; line-height: 40px; font-style: italic; white-space: nowrap; color: #212529; letter-spacing: -.2px; }
.modal-foot { height: 142px; flex: none; border-top: 2px solid #e3e3e8; padding: 32px; display: flex; justify-content: flex-end; gap: 16px; }
.btn-gray { background: #6c757d; color: #fff; }
.btn-blue { background: #337ef8; color: #fff; }
```
